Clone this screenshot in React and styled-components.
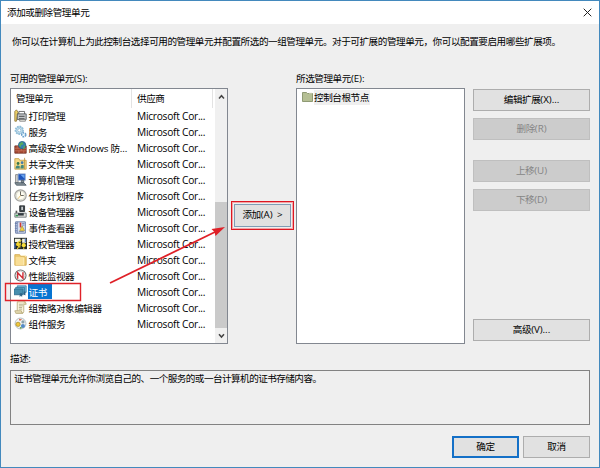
import React from 'react';
import styled, { createGlobalStyle } from 'styled-components';

const GlobalStyle = createGlobalStyle`
  * { box-sizing: border-box; }
  body { margin: 0; background: #efefef; }
`;

const Dialog = styled.div`
  position: relative;
  width: 600px;
  height: 468px;
  display: flex;
  flex-direction: column;
  background: #efefef;
  border: 1px solid #4389bd;
  color: #000;
  font-family: 'Open Sans', 'Noto Sans CJK SC', sans-serif;
  font-size: 9.6px;
  letter-spacing: -0.45px;
  line-height: 16px;
  white-space: nowrap;
  overflow: hidden;
`;

const Latin = styled.span`
  font-size: 9.8px;
  letter-spacing: -0.05px;
`;

const TitleBar = styled.header`
  flex: none;
  height: 23px;
  display: flex;
  align-items: center;
  justify-content: space-between;
  padding: 0 7px 0 6px;
  background: #fff;
`;

const Intro = styled.p`
  margin: 10px 0 0 11px;
  height: 16px;
`;

const Columns = styled.main`
  display: grid;
  grid-template-columns: 218px 67px 170px 117px;
  column-gap: 0;
  margin: 21px 0 0 9px;
`;

const Column = styled.section`
  display: flex;
  flex-direction: column;
  padding-left: ${(p) => p.$inset || 0}px;
`;

const Label = styled.div`
  height: 17px;
  line-height: 16px;
`;

const ListBox = styled.div`
  display: flex;
  height: 256px;
  background: #fff;
  border: 1px solid #828790;
`;

const Table = styled.div`
  flex: 1;
  min-width: 0;
`;

const HeaderRow = styled.div`
  display: grid;
  grid-template-columns: 121px 81px;
  height: 19px;
  line-height: 19px;
`;

const HeaderCell = styled.div`
  border-right: 1px solid #e3e3e3;
  padding-left: 5px;
`;

const Row = styled.div`
  display: grid;
  grid-template-columns: 17px 109px 1fr;
  height: 16px;
`;

const IconCell = styled.span`
  padding: 1px 0 0 3px;
  line-height: 0;
`;

const Name = styled.span`
  overflow: hidden;
`;

const NameText = styled.span`
  display: block;
  width: fit-content;
  height: 15px;
  line-height: 17px;
  padding: 0 ${(p) => (p.$selected ? 5 : 0)}px 0 0.5px;
  color: ${(p) => (p.$selected ? '#fff' : '#000')};
  background: ${(p) => (p.$selected ? '#0874d1' : 'transparent')};
`;

const Vendor = styled.span`
  font-size: 10.2px;
  line-height: 17px;
  letter-spacing: -0.26px;
`;

const ScrollBar = styled.div`
  width: 12px;
  display: flex;
  flex-direction: column;
  align-items: center;
  justify-content: space-between;
  padding: 5px 0 4px;
  background: linear-gradient(#cacaca, #cacaca) 0 113px / 12px 126px no-repeat #f0f0f0;
`;

const AddFrame = styled.div`
  display: flex;
  margin: 130px 0 0 3px;
  width: 63px;
  height: 29px;
  padding: 2px;
  border: 1px solid #dd1722;
  outline: 1px solid #f1a4a6;
  outline-offset: -2px;
`;

const Button = styled.button`
  flex: none;
  width: ${(p) => p.$width || 117}px;
  height: ${(p) => p.$height || 22}px;
  margin: ${(p) => p.$top || 0}px 0 0;
  padding: 0 0 1px;
  font: inherit;
  letter-spacing: inherit;
  line-height: 18px;
  color: #000;
  background: #e1e1e1;
  border: ${(p) => (p.$primary ? '2px solid #1470c7' : '1px solid #adadad')};
  &:disabled {
    color: #858585;
    background: #cccccc;
    border-color: #bfbfbf;
  }
`;

const AddButton = styled(Button)`
  width: 57px;
  height: 23px;
  border-color: #7f9db5;
  word-spacing: 2px;
`;

const TreeItem = styled.div`
  display: flex;
  align-items: flex-start;
  padding: 1px 0 0 5px;
`;

const TreeLabel = styled.span`
  height: 15px;
  line-height: 16px;
  padding: 0 1px 0 0;
  margin-left: 1px;
  background: #efefef;
`;

const Description = styled.section`
  margin: 7px 9px 0;
`;

const DescriptionBox = styled.div`
  height: 55px;
  margin-top: 2px;
  padding-left: 3px;
  letter-spacing: -0.55px;
  border: 1px solid #828282;
`;

const Footer = styled.footer`
  display: flex;
  justify-content: flex-end;
  gap: 4px;
  margin: 11px 9px 0;
`;

const Overlay = styled.svg`
  position: absolute;
  left: -1px;
  top: -1px;
  pointer-events: none;
`;

const Svg = ({ children, size = 13 }) => (
  <svg width={size} height={size} viewBox="0 0 16 16">{children}</svg>
);

const icons = {
  printer: (
    <Svg>
      <path d="M1 3 3 1l2 3-2 11H1z" fill="#eed267" stroke="#8c7438" />
      <path d="M6 3h7v4H6z" fill="#fff" stroke="#555" />
      <path d="M4 6h11v7H4z" fill="#c3c7c9" stroke="#494d50" />
      <path d="M6 9h7M6 12h7" stroke="#333" />
      <path d="M7 13h7v2H7z" fill="#f5f5ec" stroke="#777" />
    </Svg>
  ),
  gears: (
    <Svg>
      <circle cx="6.5" cy="6.5" r="4.5" fill="#d4edf7" stroke="#8fbdd8" strokeWidth="2.5" strokeDasharray="2 1" />
      <circle cx="6.5" cy="6.5" r="4" fill="#cfe6f3" stroke="#8db9d4" />
      <circle cx="6.5" cy="6.5" r="2" fill="#fff" stroke="#85b5d0" />
      <circle cx="12" cy="12" r="2.5" fill="#e9f7fd" stroke="#6b9fcb" strokeWidth="2" strokeDasharray="2 1" />
    </Svg>
  ),
  firewall: (
    <Svg>
      <path d="M1 6h14v9H1z" fill="#a84830" stroke="#71352a" />
      <path d="M1 9h14M1 12h14M4 6v3m5 0v3m-3 0v3m6-3v3" stroke="#c9806a" strokeWidth=".7" />
      <circle cx="10" cy="5" r="4.5" fill="#327fb0" stroke="#286188" />
      <path d="m7 3 3-2 2 3-3 1-1 3-2-3zm5 3 2-1-1 4-2 1z" fill="#58a95c" />
    </Svg>
  ),
  share: (
    <Svg>
      <path d="M1 2h5l1 2h8v11H1z" fill="#f3d985" stroke="#c49d44" />
      <path d="M13 1v14" stroke="#bb9340" />
      <circle cx="5" cy="8" r="1.7" fill="#37744a" />
      <circle cx="10" cy="7" r="1.7" fill="#467bab" />
      <path d="M2 14q0-5 5-3v3zM8 13q0-5 4-3v4H8z" fill="#42877c" />
    </Svg>
  ),
  computer: (
    <Svg>
      <path d="M2 2h3v10H2z" fill="#d9d9d4" stroke="#777" />
      <path d="M5 1h9v8H5z" fill="#1e55bd" stroke="#a5b6d1" />
      <path d="m8 2 5 5V2z" fill="#69a4ef" />
      <path d="M9 9h3v3H9zM1 12h11l3 3H3z" fill="#879299" stroke="#495862" />
    </Svg>
  ),
  clock: (
    <Svg>
      <circle cx="8" cy="8" r="7" fill="#edf0e9" stroke="#a4a39f" strokeWidth="1.4" />
      <circle cx="8" cy="8" r="5" fill="#fffdf1" stroke="#d7d6c8" />
      <path d="M8 3v5h4" fill="none" stroke="#686861" strokeWidth="1.2" />
      <path d="M8 8 5 12" stroke="#e3b55b" />
    </Svg>
  ),
  device: (
    <Svg>
      <path d="M7 1h6v7H7z" fill="#3f474c" stroke="#24292c" />
      <path d="M9 2h2v4H9z" fill="#d2d6d8" />
      <path d="M2 7h2v5H2z" fill="#555" />
      <path d="M1 10h14v5H1z" fill="#dcdedb" stroke="#697175" />
      <path d="M5 10h7v3H5z" fill="#333b41" />
      <path d="M2 13h3" stroke="#319650" strokeWidth="2" />
    </Svg>
  ),
  event: (
    <Svg>
      <path d="M2 1h12v14H2z" fill="#d5def1" stroke="#586d9c" />
      <path d="M4 1v14" stroke="#677dac" />
      <path d="M1 3h3M1 6h3M1 9h3M1 12h3M10 3h3M10 5h3M6 13h6" stroke="#6379a8" />
      <path d="M8 2v6" stroke="#d03b32" strokeWidth="2" />
      <path d="m7 12 3-6 3 6z" fill="#f3d33e" stroke="#9c8632" strokeWidth=".7" />
    </Svg>
  ),
  auth: (
    <Svg>
      <path d="M0 1h16v14H0z" fill="#212725" />
      <path d="M1 2h7v4H1zM10 2h5v5h-5z" fill="#f3f2df" />
      <circle cx="5" cy="9" r="2.5" fill="#f4d52c" />
      <circle cx="12" cy="10" r="2.5" fill="#f8de3c" />
      <path d="M6 11 4 15m4-8L7 13m5 0v2M4 7l5-3" stroke="#e8cf36" strokeWidth="1.4" />
      <path d="M1 7v7M14 2v4" stroke="#527cc8" strokeWidth="1.5" />
    </Svg>
  ),
  folder: (
    <Svg>
      <path d="M1 2h6l1 2h7v11H1z" fill="#edcb72" stroke="#d4a94b" />
      <path d="M2 5h10v10H2z" fill="#f9de96" />
      <path d="M9 3h5v2M12 6v9" fill="none" stroke="#fff1c7" />
    </Svg>
  ),
  perf: (
    <Svg>
      <circle cx="8" cy="8" r="6.8" fill="#fff" stroke="#686969" strokeWidth="1.3" />
      <circle cx="8" cy="8" r="5.2" fill="none" stroke="#c6c6c6" />
      <path d="M4.5 12V4.5l6.5 7V4" fill="none" stroke="#cf2932" strokeWidth="1.7" />
    </Svg>
  ),
  cert: (
    <Svg>
      <path d="M4 1h11v8H4z" fill="#78bed9" stroke="#377da7" />
      <path d="M2 3h11v8H2z" fill="#5fa9c8" stroke="#37789b" />
      <path d="M0 5h11v7H0z" fill="#468eae" stroke="#316c8f" />
      <path d="M7 10h3v5l-1.5-2L7 15zM12 8h2v5l-1-1-1 1z" fill="#2c6184" />
    </Svg>
  ),
  policy: (
    <Svg>
      <path d="M4 1h10q-2 1-2 4v8q0 2-2 2H2q2-1 2-4z" fill="#fbf6df" stroke="#b5a778" />
      <path d="M6 4h5M6 6h5M6 8h4M6 10h4" stroke="#aaa284" />
      <path d="M1 12h8q0 3 2 3H3q-2-1-2-3zM12 1q3 0 3 3h-3" fill="#e9dfb7" stroke="#b5a778" />
    </Svg>
  ),
  component: (
    <Svg>
      <circle cx="8" cy="8" r="6.7" fill="#f1f4f5" stroke="#a6b1b4" />
      <circle cx="5" cy="9" r="2.6" fill="#f0c83c" stroke="#ad902c" />
      <circle cx="11" cy="11" r="2.5" fill="#538ac6" />
      <circle cx="11" cy="6" r="2" fill="#8ca1aa" />
      <path d="M6 2l4 1-3 2z" fill="#d86345" />
      <path d="m7 12 3 1-2 2z" fill="#6ba75a" />
    </Svg>
  ),
};

const snapIns = [
  ['printer', '打印管理'],
  ['gears', '服务'],
  ['firewall', <>高级安全 <Latin>Windows</Latin> 防<Latin>...</Latin></>],
  ['share', '共享文件夹'],
  ['computer', '计算机管理'],
  ['clock', '任务计划程序'],
  ['device', '设备管理器'],
  ['event', '事件查看器'],
  ['auth', '授权管理器'],
  ['folder', '文件夹'],
  ['perf', '性能监视器'],
  ['cert', '证书'],
  ['policy', '组策略对象编辑器'],
  ['component', '组件服务'],
];

const Chevron = ({ down }) => (
  <svg width="7" height="6" viewBox="0 0 7 6">
    <path d={down ? 'M1 1.2 3.5 4 6 1.2' : 'M1 4.5 3.5 1.7 6 4.5'} fill="none" stroke="#444" strokeWidth="1.5" />
  </svg>
);

export default function App() {
  return (
    <>
      <GlobalStyle />
      <Dialog>
        <TitleBar>
          <span>添加或删除管理单元</span>
          <svg width="9" height="9" viewBox="0 0 9 9">
            <path d="m.7.7 7.6 7.6m0-7.6L.7 8.3" stroke="#222" strokeWidth="1" />
          </svg>
        </TitleBar>
        <Intro>
          你可以在计算机上为此控制台选择可用的管理单元并配置所选的一组管理单元。对于可扩展的管理单元，你可以配置要启用哪些扩展项。
        </Intro>
        <Columns>
          <Column>
            <Label>可用的管理单元<Latin>(S):</Latin></Label>
            <ListBox>
              <Table>
                <HeaderRow>
                  <HeaderCell>管理单元</HeaderCell>
                  <HeaderCell>供应商</HeaderCell>
                </HeaderRow>
                {snapIns.map(([icon, name]) => (
                  <Row key={icon}>
                    <IconCell>{icons[icon]}</IconCell>
                    <Name>
                      <NameText $selected={icon === 'cert'}>{name}</NameText>
                    </Name>
                    <Vendor>Microsoft Cor...</Vendor>
                  </Row>
                ))}
              </Table>
              <ScrollBar>
                <Chevron />
                <Chevron down />
              </ScrollBar>
            </ListBox>
          </Column>
          <Column>
            <AddFrame>
              <AddButton>添加<Latin>(A) &gt;</Latin></AddButton>
            </AddFrame>
          </Column>
          <Column $inset={1}>
            <Label>所选管理单元<Latin>(E):</Latin></Label>
            <ListBox>
              <TreeItem>
                <svg width="11" height="13" viewBox="0 0 11 13">
                  <path d="M.5 2.5h4l1 1h5v8H.5z" fill="#b5bf94" stroke="#8f9a74" />
                  <path d="M7 2.5h3v1H7z" fill="#eef0df" />
                </svg>
                <TreeLabel>控制台根节点</TreeLabel>
              </TreeItem>
            </ListBox>
          </Column>
          <Column $inset={8}>
            <Button $top={18}>编辑扩展<Latin>(X)...</Latin></Button>
            <Button $top={7} disabled>删除<Latin>(R)</Latin></Button>
            <Button $top={20} disabled>上移<Latin>(U)</Latin></Button>
            <Button $top={7} disabled>下移<Latin>(D)</Latin></Button>
            <Button $top={108}>高级<Latin>(V)...</Latin></Button>
          </Column>
        </Columns>
        <Description>
          <Label>描述<Latin>:</Latin></Label>
          <DescriptionBox>
            证书管理单元允许你浏览自己的、一个服务的或一台计算机的证书存储内容。
          </DescriptionBox>
        </Description>
        <Footer>
          <Button $width={67} $height={22} $primary>确定</Button>
          <Button $width={67} $height={22}>取消</Button>
        </Footer>
        <Overlay width="600" height="468" viewBox="0 0 600 468">
          <path d="M5.5 283.5h75v17h-75z" fill="none" stroke="#df2229" strokeWidth="1.4" />
          <path d="M110 283 215 232" stroke="#df2027" strokeWidth="1.8" />
          <path d="m225 227-9.500 9-1-4-3-3z" fill="#df2027" />
        </Overlay>
      </Dialog>
    </>
  );
}
